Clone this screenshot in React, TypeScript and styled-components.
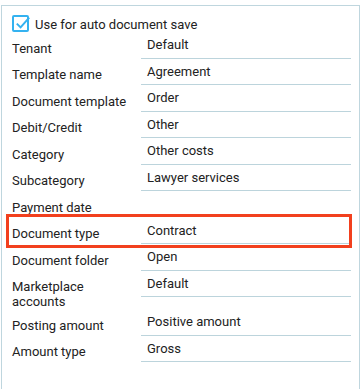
import React from "react";
import styled, { createGlobalStyle } from "styled-components";

const Global = createGlobalStyle`
  html, body { margin: 0; padding: 0; background: #fff; }
  body { font-family: Roboto, "Noto Sans", Arial, sans-serif; font-size: 13px; color: #222; }
`;

const Panel = styled.div`
  box-sizing: border-box;
  width: 359px;
  margin: 5px 0 0 1px;
  border: 1px solid #bfd6de;
  padding: 9px 8px 60px 9px;
`;

const CheckRow = styled.label`
  display: flex;
  align-items: center;
  gap: 6px;
  height: 17px;
  line-height: 17px;
  color: #222;
  margin-left: 1px;
`;

const Box = styled.span`
  position: relative;
  box-sizing: border-box;
  width: 17px;
  height: 17px;
  border: 2px solid #34b2f0;
  border-radius: 2px;
  background: #fff;
  display: block;
  svg {
    position: absolute;
    left: 1px;
    top: -2px;
  }
`;

const CheckText = styled.span`
  position: relative;
  top: 1px;
`;

const Row = styled.div<{ $highlight?: boolean }>`
  position: relative;
  display: flex;
  align-items: flex-start;
  ${(p) =>
    p.$highlight &&
    `
    &::after {
      content: "";
      position: absolute;
      left: -5px;
      right: -1px;
      top: -4px;
      bottom: -3.5px;
      border: 3px solid #f2401e;
      pointer-events: none;
    }
  `}
`;

const Label = styled.div`
  box-sizing: border-box;
  width: 130px;
  flex: none;
  padding: 8.5px 10px 0 1px;
  line-height: 15px;
  color: #222;
`;

const Value = styled.div<{ $empty?: boolean }>`
  flex: 1;
  box-sizing: border-box;
  height: 26.5px;
  padding: 3px 0 3px 6px;
  line-height: 19.5px;
  border-bottom: 1px solid ${(p) => (p.$empty ? "transparent" : "#bcd4dc")};
  color: #222;
`;

const rows: { label: string; value: string; highlight?: boolean }[] = [
  { label: "Tenant", value: "Default" },
  { label: "Template name", value: "Agreement" },
  { label: "Document template", value: "Order" },
  { label: "Debit/Credit", value: "Other" },
  { label: "Category", value: "Other costs" },
  { label: "Subcategory", value: "Lawyer services" },
  { label: "Payment date", value: "" },
  { label: "Document type", value: "Contract", highlight: true },
  { label: "Document folder", value: "Open" },
  { label: "Marketplace accounts", value: "Default" },
  { label: "Posting amount", value: "Positive amount" },
  { label: "Amount type", value: "Gross" },
];

export default function App() {
  return (
    <>
      <Global />
      <Panel>
        <CheckRow>
          <Box>
            <svg width="16" height="16" viewBox="0 0 16 16">
              <path d="M1.8 8.6 L5.6 12.4 L14.2 2.6" fill="none" stroke="#34b2f0" strokeWidth="2" />
            </svg>
          </Box>
          <CheckText>Use for auto document save</CheckText>
        </CheckRow>
        {rows.map((r) => (
          <Row key={r.label} $highlight={r.highlight}>
            <Label>{r.label}</Label>
            <Value $empty={r.value === ""}>{r.value}</Value>
          </Row>
        ))}
      </Panel>
    </>
  );
}
